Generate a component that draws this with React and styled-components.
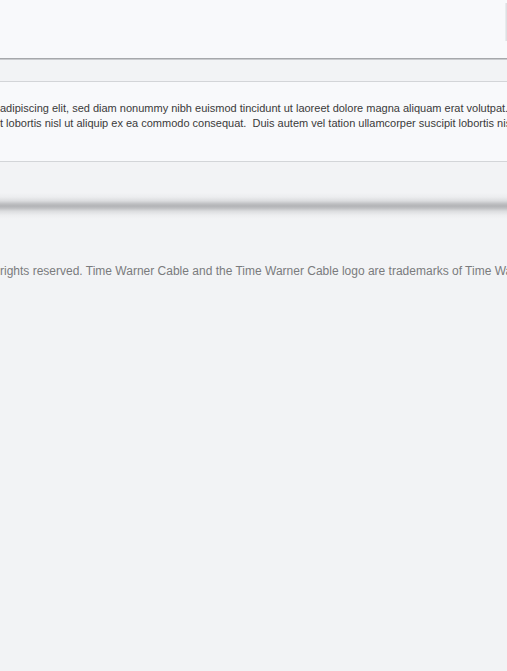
import React from "react";
import styled, { createGlobalStyle } from "styled-components";

const Global = createGlobalStyle`
  html, body { margin: 0; padding: 0; }
  body {
    background: #f2f3f5;
    font-family: "Liberation Sans", Arial, sans-serif;
    overflow: hidden;
  }
`;

const Page = styled.div`
  width: 507px;
  min-height: 671px;
  display: flex;
  flex-direction: column;
  overflow: hidden;
`;

const Header = styled.header`
  height: 58px;
  flex-shrink: 0;
  background: #f8f9fb;
  border-bottom: 1px solid #a6a8ab;
  box-shadow: 0 1px 0 #c9cbce;
  display: flex;
  justify-content: flex-end;
  align-items: flex-start;
`;

const EdgeTab = styled.div`
  width: 2px;
  height: 38px;
  margin-top: 3px;
  background: linear-gradient(to right, #eef0f2, #d9dbde);
`;

const Band = styled.div`
  height: 21px;
  flex-shrink: 0;
`;

const Panel = styled.section`
  height: 60px;
  flex-shrink: 0;
  background: #f8f9fb;
  border-top: 1px solid #d3d5d8;
  border-bottom: 1px solid #d3d5d8;
  padding-top: 19px;
  margin-top: 1px;
`;

const Line = styled.p`
  margin: 0;
  font-size: 11px;
  line-height: 15px;
  color: #3a3a3a;
  white-space: pre;
  overflow: hidden;
`;

const ShadowBar = styled.div`
  margin-top: 31px;
  height: 26px;
  flex-shrink: 0;
  background: linear-gradient(
    to bottom,
    rgba(168, 169, 172, 0) 0%,
    rgba(168, 169, 172, 0.08) 15%,
    rgba(168, 169, 172, 0.3) 30%,
    rgba(168, 169, 172, 0.7) 42%,
    rgba(168, 169, 172, 0.85) 50%,
    rgba(168, 169, 172, 0.7) 58%,
    rgba(168, 169, 172, 0.3) 70%,
    rgba(168, 169, 172, 0.08) 85%,
    rgba(168, 169, 172, 0) 100%
  );
`;

const Footer = styled.footer`
  margin-top: 45px;
  font-size: 12px;
  line-height: 14px;
  color: #7a7b7d;
  white-space: pre;
  overflow: hidden;
`;

export default function App() {
  return (
    <>
      <Global />
      <Page>
        <Header>
          <EdgeTab />
        </Header>
        <Band />
        <Panel>
          <Line>
            adipiscing elit, sed diam nonummy nibh euismod tincidunt ut laoreet dolore magna aliquam erat volutpat.
          </Line>
          <Line>
            {"t lobortis nisl ut aliquip ex ea commodo consequat.  Duis autem vel tation ullamcorper suscipit lobortis nisl ut aliquip"}
          </Line>
        </Panel>
        <ShadowBar />
        <Footer>
          rights reserved. Time Warner Cable and the Time Warner Cable logo are trademarks of Time Warner Inc. Used under license.
        </Footer>
      </Page>
    </>
  );
}
